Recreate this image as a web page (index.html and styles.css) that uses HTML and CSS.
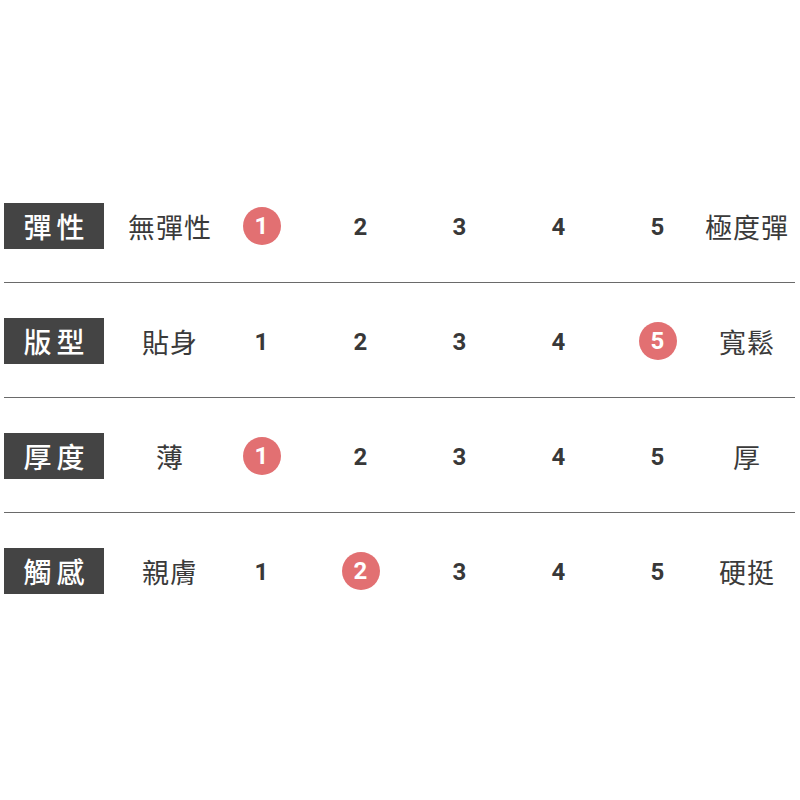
FILE: index.html
```html
<!DOCTYPE html>
<html lang="zh-Hant">
<head>
<meta charset="utf-8">
<title>Fabric chart</title>
<link rel="stylesheet" href="styles.css">
</head>
<body>
<div class="chart">
  <div class="row">
    <div class="label">彈性</div>
    <div class="low">無彈性</div>
    <div class="num"><span class="dot">1</span></div>
    <div class="num">2</div>
    <div class="num">3</div>
    <div class="num">4</div>
    <div class="num">5</div>
    <div class="high">極度彈</div>
  </div>
  <div class="rule"></div>
  <div class="row">
    <div class="label">版型</div>
    <div class="low">貼身</div>
    <div class="num">1</div>
    <div class="num">2</div>
    <div class="num">3</div>
    <div class="num">4</div>
    <div class="num"><span class="dot">5</span></div>
    <div class="high">寬鬆</div>
  </div>
  <div class="rule"></div>
  <div class="row">
    <div class="label">厚度</div>
    <div class="low">薄</div>
    <div class="num"><span class="dot">1</span></div>
    <div class="num">2</div>
    <div class="num">3</div>
    <div class="num">4</div>
    <div class="num">5</div>
    <div class="high">厚</div>
  </div>
  <div class="rule"></div>
  <div class="row">
    <div class="label">觸感</div>
    <div class="low">親膚</div>
    <div class="num">1</div>
    <div class="num"><span class="dot">2</span></div>
    <div class="num">3</div>
    <div class="num">4</div>
    <div class="num">5</div>
    <div class="high">硬挺</div>
  </div>
</div>
</body>
</html>
```

FILE: styles.css
```css
html, body {
  margin: 0;
  padding: 0;
  background: #ffffff;
}

.chart {
  padding: 203px 5px 0 4px;
  display: flex;
  flex-direction: column;
  font-family: "Noto Sans CJK TC", "Noto Sans", sans-serif;
  color: #3a3a3a;
}

.row {
  display: flex;
  align-items: center;
  height: 46px;
}

.rule {
  height: 1px;
  background: #6a6a6a;
  margin: 33px 0 35px 0;
}

.label {
  flex: none;
  width: 100px;
  height: 46px;
  background: #444444;
  color: #ffffff;
  font-size: 28px;
  font-weight: 500;
  letter-spacing: 5px;
  padding-left: 5px;
  box-sizing: border-box;
  display: flex;
  align-items: center;
  justify-content: center;
  line-height: 1;
  margin-right: 24px;
}

.low,
.high {
  flex: none;
  width: 84px;
  min-width: 0;
  font-size: 27px;
  line-height: 1;
  text-align: center;
  letter-spacing: 1px;
  white-space: nowrap;
  display: flex;
  justify-content: center;
}

.high {
  margin-left: -2px;
}

.num {
  flex: none;
  width: 99px;
  display: flex;
  align-items: center;
  justify-content: center;
  font-family: "Roboto", "Liberation Sans", sans-serif;
  font-weight: 700;
  font-size: 24px;
  color: #383838;
  line-height: 1;
  padding-top: 2px;
}

.dot {
  width: 38px;
  height: 38px;
  margin-top: -2px;
  border-radius: 50%;
  background: #e27072;
  color: #ffffff;
  display: flex;
  align-items: center;
  justify-content: center;
}
```
